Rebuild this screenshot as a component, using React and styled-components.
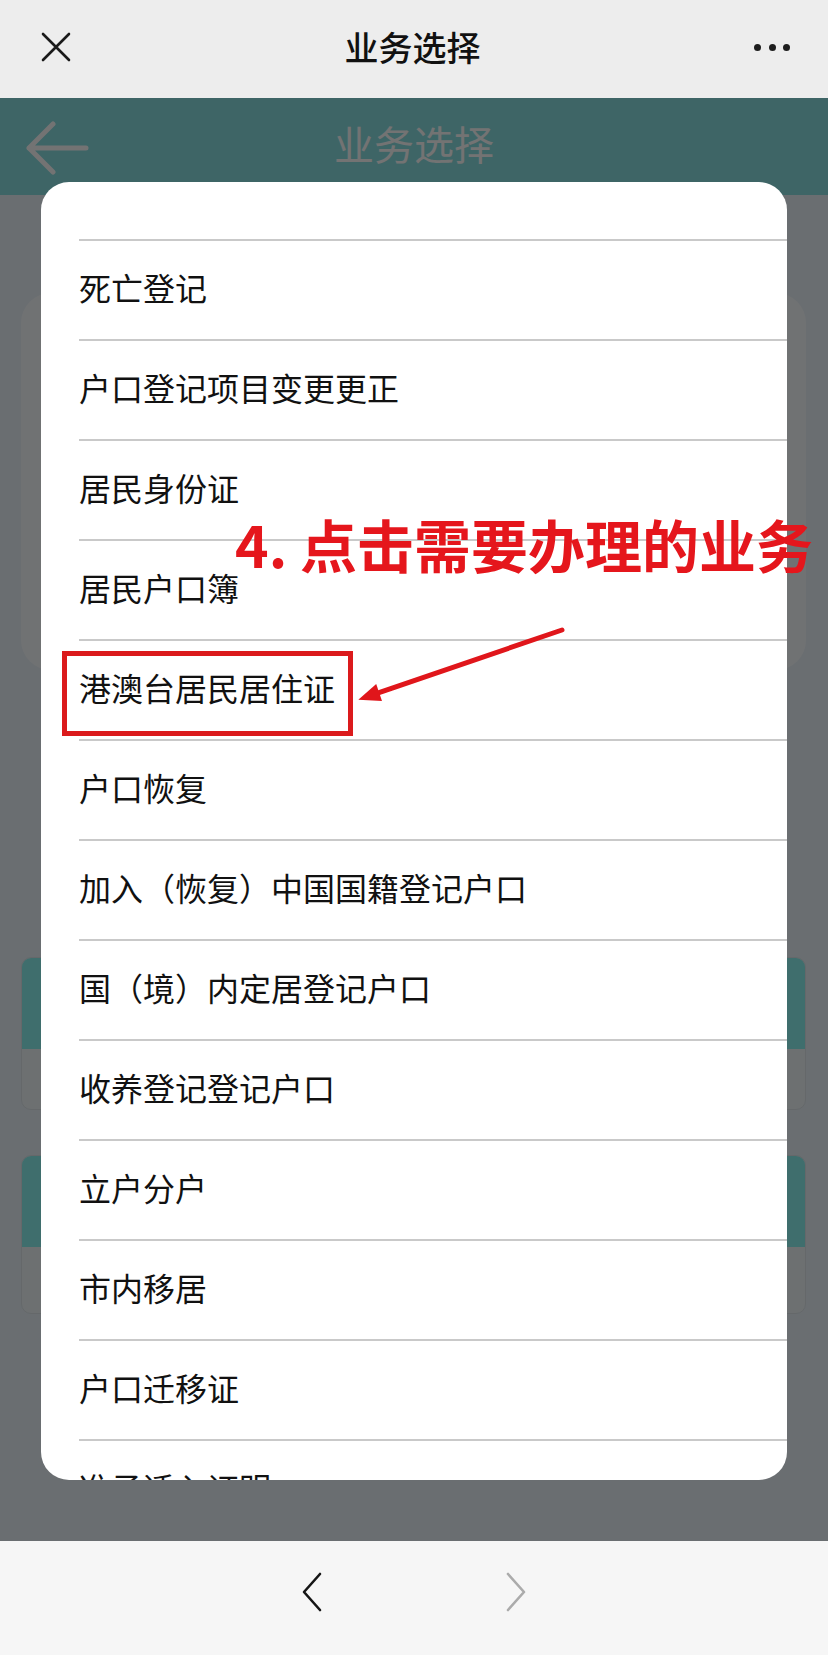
import React from "react";
import styled, { createGlobalStyle } from "styled-components";

const GlobalStyle = createGlobalStyle`
  html, body { margin: 0; padding: 0; background: #f6f6f6; }
  * { box-sizing: border-box; }
  body { font-family: "Noto Sans CJK SC", "Noto Sans", sans-serif; }
`;

const Screen = styled.div`
  width: 828px;
  height: 1655px;
  display: flex;
  flex-direction: column;
  position: relative;
  overflow: hidden;
  font-family: "Noto Sans CJK SC", "Noto Sans", sans-serif;
`;

/* ---------- WeChat top bar ---------- */
const TopBar = styled.header`
  height: 98px;
  flex: 0 0 98px;
  background: #ededed;
  display: grid;
  grid-template-columns: 1fr auto 1fr;
  align-items: center;
  padding: 0 38px 0 41px;
  padding-bottom: 4px;
`;

const TopTitle = styled.h1`
  margin: 0;
  font-size: 34px;
  font-weight: 500;
  color: #111;
  line-height: 1;
  transform: translateX(-3px);
`;

const IconSlot = styled.div`
  display: flex;
  align-items: center;
  justify-content: ${(p) => (p.$end ? "flex-end" : "flex-start")};
`;

const Dots = styled.div`
  display: flex;
  gap: 7.5px;
`;

const Dot = styled.span`
  width: 7px;
  height: 7px;
  border-radius: 50%;
  background: #1e1e1e;
`;

/* ---------- Web view (page behind the modal) ---------- */
const WebView = styled.main`
  flex: 1;
  position: relative;
  background: #ecf4fb;
  display: flex;
  flex-direction: column;
  overflow: hidden;
`;

const PageHeader = styled.div`
  height: 97px;
  flex: 0 0 97px;
  background: #8ae0e3;
  position: relative;
  display: flex;
  align-items: center;
  justify-content: center;
  padding-bottom: 8px;
`;

const BackArrow = styled.svg`
  position: absolute;
  left: 25px;
  top: 23px;
`;

const PageTitle = styled.div`
  font-size: 40px;
  color: #ffffff;
  line-height: 1;
`;

const PageBody = styled.div`
  display: flex;
  flex-direction: column;
  padding: 98px 22px 0 21px;
`;

const InfoCard = styled.div`
  height: 377px;
  background: #f9fdff;
  border-radius: 30px;
`;

const TealCard = styled.div`
  margin-top: ${(p) => p.$gap}px;
  border-radius: 10px;
  overflow: hidden;
  border: 1px solid #dfe7ec;
  background: #f2f8fb;
`;

const TealHead = styled.div`
  height: 91px;
  background: #8cf4f2;
`;

const TealBody = styled.div`
  height: ${(p) => p.$h}px;
`;

const Overlay = styled.div`
  position: absolute;
  inset: 0;
  background: rgba(0, 0, 0, 0.55);
`;

/* ---------- Modal list ---------- */
const Modal = styled.div`
  position: absolute;
  left: 41px;
  top: 84px;
  width: 746px;
  height: 1298px;
  background: #ffffff;
  border-radius: 28px;
  overflow: hidden;
  padding-top: 57px;
`;

const List = styled.ul`
  list-style: none;
  margin: 0;
  padding: 0 0 0 38px;
`;

const Item = styled.li`
  height: 100px;
  border-top: 2px solid #c9c9c9;
  display: flex;
  align-items: center;
  font-size: 32px;
  color: #111;
  line-height: 1;
  padding-bottom: 6px;
`;

/* ---------- Annotation ---------- */
const Note = styled.div`
  position: absolute;
  left: 235px;
  top: 417px;
  font-size: 57px;
  font-weight: 700;
  color: #e5161c;
  line-height: 1;
  white-space: nowrap;
`;

const Highlight = styled.div`
  position: absolute;
  left: 62px;
  top: 553px;
  width: 291px;
  height: 85px;
  border: 5px solid #db1a1c;
`;

const Pointer = styled.svg`
  position: absolute;
  left: 350px;
  top: 522px;
`;

/* ---------- Bottom nav bar ---------- */
const NavBar = styled.footer`
  height: 114px;
  flex: 0 0 114px;
  background: #f6f6f6;
  display: flex;
  justify-content: center;
  align-items: flex-start;
  padding-top: 31px;
  gap: 182px;
`;

const Chevron = styled.svg`
  display: block;
`;

const items = [
  "死亡登记",
  "户口登记项目变更更正",
  "居民身份证",
  "居民户口簿",
  "港澳台居民居住证",
  "户口恢复",
  "加入（恢复）中国国籍登记户口",
  "国（境）内定居登记户口",
  "收养登记登记户口",
  "立户分户",
  "市内移居",
  "户口迁移证",
  "准予迁入证明",
];

export default function App() {
  return (
    <Screen>
      <GlobalStyle />
      <TopBar>
        <IconSlot>
          <svg width="30" height="30" viewBox="0 0 30 30">
            <path d="M2 2 L28 28 M28 2 L2 28" stroke="#1a1a1a" strokeWidth="2.6" strokeLinecap="round" fill="none" />
          </svg>
        </IconSlot>
        <TopTitle>业务选择</TopTitle>
        <IconSlot $end>
          <Dots>
            <Dot />
            <Dot />
            <Dot />
          </Dots>
        </IconSlot>
      </TopBar>

      <WebView>
        <PageHeader>
          <BackArrow width="64" height="54" viewBox="0 0 64 54">
            <path d="M4 27 L61 27 M28 3 L4 27 L28 51" stroke="#ffffff" strokeWidth="5" strokeLinecap="round" strokeLinejoin="round" fill="none" />
          </BackArrow>
          <PageTitle>业务选择</PageTitle>
        </PageHeader>
        <PageBody>
          <InfoCard />
          <TealCard $gap={287}>
            <TealHead />
            <TealBody $h={60} />
          </TealCard>
          <TealCard $gap={45}>
            <TealHead />
            <TealBody $h={66} />
          </TealCard>
        </PageBody>

        <Overlay />

        <Modal>
          <List>
            {items.map((t) => (
              <Item key={t}>{t}</Item>
            ))}
          </List>
        </Modal>

        <Note>4. 点击需要办理的业务</Note>
        <Highlight />
        <Pointer width="220" height="95" viewBox="0 0 220 95">
          <line x1="212" y1="10" x2="29" y2="72.6" stroke="#e0161b" strokeWidth="5" strokeLinecap="round" />
          <polygon points="8.3,79.7 32,81.1 26.2,64.1" fill="#e0161b" />
        </Pointer>
      </WebView>

      <NavBar>
        <Chevron width="22" height="40" viewBox="0 0 22 40">
          <path d="M19 2 L3 20 L19 38" stroke="#151515" strokeWidth="2.6" strokeLinecap="round" strokeLinejoin="round" fill="none" />
        </Chevron>
        <Chevron width="22" height="40" viewBox="0 0 22 40">
          <path d="M3 2 L19 20 L3 38" stroke="#ababab" strokeWidth="2.6" strokeLinecap="round" strokeLinejoin="round" fill="none" />
        </Chevron>
      </NavBar>
    </Screen>
  );
}
